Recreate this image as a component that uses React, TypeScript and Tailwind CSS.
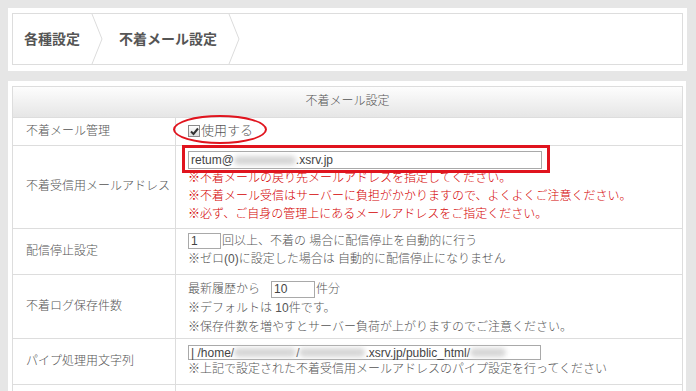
const FONT = { fontFamily: '"Liberation Sans", "Noto Sans CJK JP", "Noto Sans", sans-serif' };

const Chevron = () => (
  <svg width="12" height="50" viewBox="0 0 12 50" className="shrink-0">
    <path d="M1 0 L11 25 L1 50" fill="none" stroke="#dcdcdc" strokeWidth="1" />
  </svg>
);

const Blur = ({ w }: { w: number }) => (
  <span
    className="inline-block h-[9px] rounded-full bg-[#d6d6d6] blur-[2.5px] align-middle"
    style={{ width: w }}
  />
);

const Row = ({
  label,
  children,
  className = '',
}: {
  label: string;
  children: React.ReactNode;
  className?: string;
}) => (
  <div className="flex border-b border-[#dddddd]">
    <div className="flex w-[163px] shrink-0 items-center border-r border-[#dddddd] pb-[2px] pl-[13px] text-[12px] font-light text-[#555555]">
      {label}
    </div>
    <div className={`relative flex-1 pl-[12px] text-[12px] font-light text-[#555555] ${className}`}>
      {children}
    </div>
  </div>
);

export default function App() {
  return (
    <div className="h-[391px] w-[696px] overflow-hidden bg-[#e6e6e6] pt-[8px]" style={FONT}>
      {/* breadcrumb */}
      <div className="ml-[8px] w-[679px] bg-white px-[4px] pb-[6px] pt-[5px]">
        <div className="flex h-[52px] items-center border border-[#dddddd] pl-[11px] text-[14px] font-bold text-[#555555]">
          <span>各種設定</span>
          <span className="ml-[11px] mr-[16px] flex">
            <Chevron />
          </span>
          <span>不着メール設定</span>
          <span className="ml-[11px] flex">
            <Chevron />
          </span>
        </div>
      </div>

      {/* settings table */}
      <div className="ml-[8px] mt-[10px] w-[678px] bg-white px-[4px] pt-[5px]">
        <div className="w-[671px] border-x border-t border-[#dddddd]">
          <div className="flex h-[31px] items-center justify-center border-b border-[#dddddd] bg-gradient-to-b from-[#fdfdfd] to-[#e6e6e6] pb-[2px] text-[12px] font-light text-[#555555]">
            不着メール設定
          </div>

          <Row label="不着メール管理" className="flex h-[27px] items-center pb-[2px]">
            <span className="mt-[1px] flex h-[12px] w-[12px] items-center justify-center border border-[#8a8a8a] bg-gradient-to-b from-[#ffffff] to-[#dcdcdc]">
              <svg width="9" height="9" viewBox="0 0 9 9">
                <path d="M1 4.5 L3.5 7 L8 1.5" fill="none" stroke="#333333" strokeWidth="2" />
              </svg>
            </span>
            <span className="ml-[1px] text-[13px]">使用する</span>
            <span className="pointer-events-none absolute left-[-3px] top-[-3px] h-[29px] w-[94px] rounded-[50%] border-[2.5px] border-[#e0141e]" />
          </Row>

          <Row label="不着受信用メールアドレス" className="pb-[5px] pt-[5px]">
            <div className="flex h-[18px] w-[354px] items-center border border-[#a9a9a9] pl-[2px] text-[#444444] leading-none">
              retum@<Blur w={62} />.xsrv.jp
            </div>
            <div className="leading-[18px] text-[#d40000]">
              <div>※不着メールの戻り先メールアドレスを指定してください。</div>
              <div>※不着メール受信はサーバーに負担がかかりますので、よくよくご注意ください。</div>
              <div>※必ず、ご自身の管理上にあるメールアドレスをご指定ください。</div>
            </div>
            <span className="pointer-events-none absolute left-[6px] top-[-1px] h-[28px] w-[368px] border-[3px] border-[#e0141e]" />
          </Row>

          <Row label="配信停止設定" className="pb-[6px] pt-[3px] leading-[18px]">
            <div className="flex h-[18px] items-center">
              <span className="flex h-[16px] w-[33px] items-center border border-[#a9a9a9] pl-[2px] text-[#444444]">
                1
              </span>
              <span className="ml-[1px]">回以上、不着の 場合に配信停止を自動的に行う</span>
            </div>
            <div>※ゼロ(0)に設定した場合は 自動的に配信停止になりません</div>
          </Row>

          <Row label="不着ログ保存件数" className="pb-[1px] pt-[4px] leading-[19px]">
            <div className="flex h-[20px] items-center">
              <span>最新履歴から</span>
              <span className="ml-[11px] flex h-[17px] w-[44px] items-center border border-[#a9a9a9] pl-[2px] text-[#444444]">
                10
              </span>
              <span className="ml-[1px]">件分</span>
            </div>
            <div>※デフォルトは 10件です。</div>
            <div>※保存件数を増やすとサーバー負荷が上がりますのでご注意ください。</div>
          </Row>

          <Row label="パイプ処理用文字列" className="pb-[6px] pt-[5px] leading-[17px]">
            <div className="flex h-[17px] items-center">
              <div className="flex h-[15px] w-[353px] items-center border border-[#a9a9a9] pl-[2px] text-[#444444] leading-none">
                | /home/<Blur w={62} />/<Blur w={66} />.xsrv.jp/public_html/<Blur w={36} />
              </div>
            </div>
            <div>※上記で設定された不着受信用メールアドレスのパイプ設定を行ってください</div>
          </Row>

          <Row label="" className="h-[20px]">
            <span />
          </Row>
        </div>
      </div>
    </div>
  );
}
